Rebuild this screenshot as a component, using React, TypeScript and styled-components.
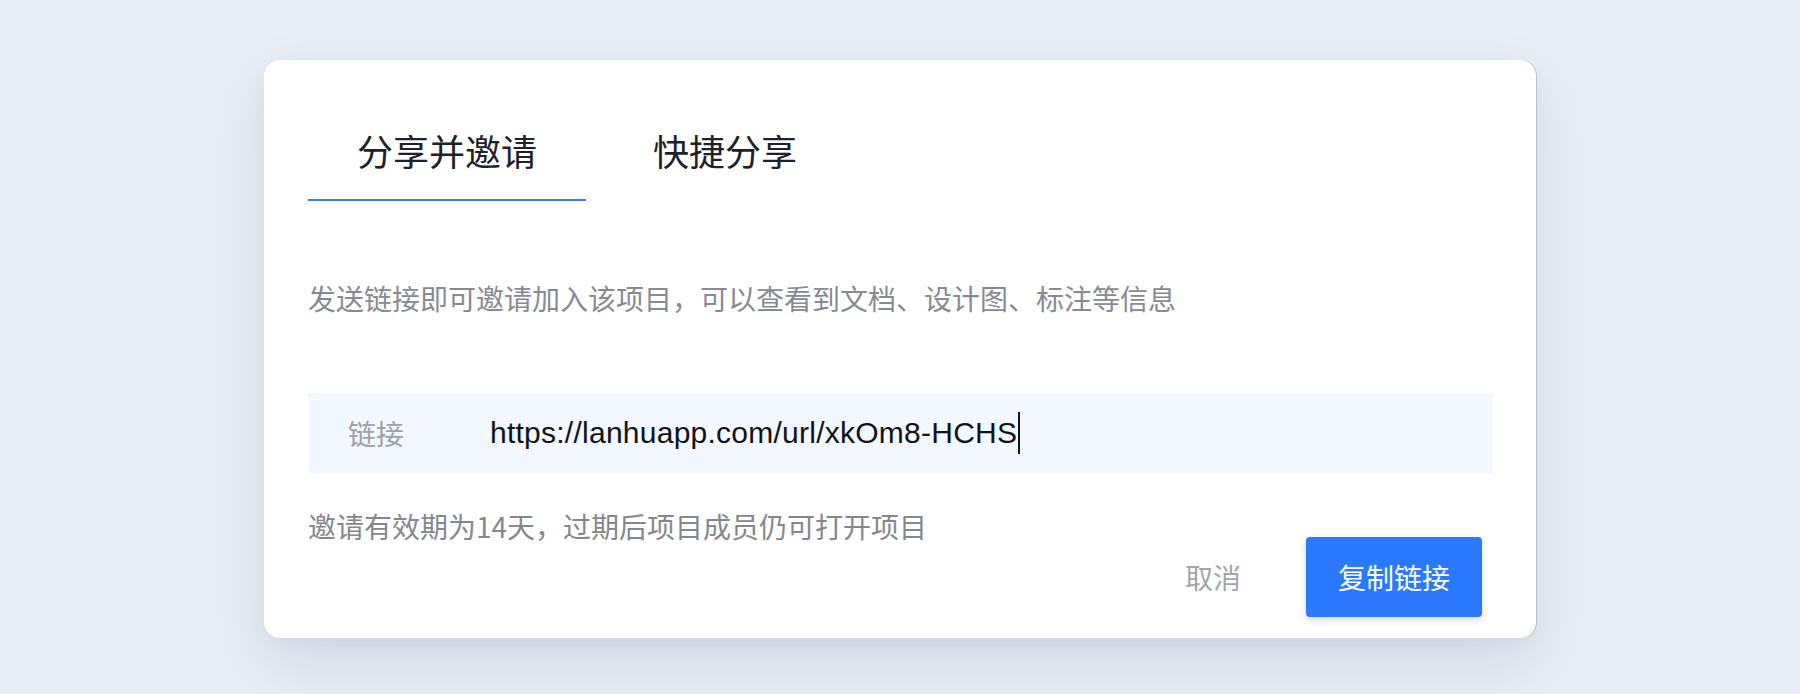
import React from "react";
import styled, { createGlobalStyle } from "styled-components";

const GlobalStyle = createGlobalStyle`
  html, body {
    margin: 0;
    padding: 0;
  }
  body {
    background: #e8eef5;
    min-height: 100vh;
    font-family: "Noto Sans CJK SC", "Noto Sans", sans-serif;
  }
  #root {
    min-height: 694px;
    overflow: hidden;
  }
`;

const Page = styled.div`
  display: flex;
  justify-content: center;
  padding-top: 60px;
`;

const Card = styled.div`
  box-sizing: border-box;
  width: 1272px;
  height: 578px;
  background: #ffffff;
  border-radius: 16px;
  padding: 0 43px 21px 44px;
  box-shadow: 1px 0 0 rgba(120, 130, 145, 0.35), 0 26px 60px rgba(60, 85, 120, 0.13),
    0 6px 18px rgba(60, 85, 120, 0.05);
  display: flex;
  flex-direction: column;
`;

const Tabs = styled.div`
  display: flex;
  padding-top: 66px;
`;

const Tab = styled.div<{ $active?: boolean }>`
  width: 278px;
  text-align: center;
  font-size: 36px;
  line-height: 48px;
  padding-bottom: 25px;
  color: #1d2129;
  border-bottom: 2px solid ${(p) => (p.$active ? "#3f7fd8" : "transparent")};
  font-family: "Noto Sans CJK SC", sans-serif;
`;

const Description = styled.p`
  margin: 77px 0 0;
  font-size: 28px;
  line-height: 40px;
  color: #868a92;
  font-family: "Noto Sans CJK SC", sans-serif;
`;

const LinkRow = styled.div`
  margin-top: 75px;
  height: 80px;
  background: #f3f7fe;
  display: flex;
  align-items: center;
  padding-left: 40px;
`;

const LinkLabel = styled.span`
  width: 142px;
  flex: none;
  font-size: 28px;
  line-height: 80px;
  color: #9da1a8;
  font-family: "Noto Sans CJK SC", sans-serif;
`;

const LinkValue = styled.span`
  font-family: "Liberation Sans", Arial, sans-serif;
  font-size: 30px;
  letter-spacing: 0.25px;
  line-height: 80px;
  color: #111318;
  display: flex;
  align-items: center;
`;

const Caret = styled.span`
  display: inline-block;
  width: 2px;
  height: 42px;
  background: #111318;
  margin-left: 1px;
`;

const Footer = styled.div`
  margin-top: 33px;
  display: flex;
  justify-content: space-between;
  align-items: flex-start;
  padding-right: 11px;
`;

const Note = styled.span`
  font-size: 28px;
  line-height: 40px;
  color: #84878e;
  font-family: "Noto Sans CJK SC", sans-serif;
`;

const Actions = styled.div`
  margin-top: 31px;
  display: flex;
  align-items: center;
  gap: 65px;
`;

const CancelButton = styled.button`
  border: none;
  background: none;
  padding: 0;
  font-family: "Noto Sans CJK SC", sans-serif;
  font-size: 28px;
  line-height: 40px;
  color: #a2a5ab;
  cursor: pointer;
`;

const PrimaryButton = styled.button`
  border: none;
  width: 176px;
  height: 80px;
  border-radius: 4px;
  background: #2a79fe;
  color: #ffffff;
  font-family: "Noto Sans CJK SC", sans-serif;
  font-size: 28px;
  line-height: 40px;
  box-shadow: 0 3px 8px rgba(30, 70, 140, 0.2);
  cursor: pointer;
`;

export default function App() {
  return (
    <>
      <GlobalStyle />
      <Page>
        <Card>
          <Tabs>
            <Tab $active>分享并邀请</Tab>
            <Tab>快捷分享</Tab>
          </Tabs>
          <Description>发送链接即可邀请加入该项目，可以查看到文档、设计图、标注等信息</Description>
          <LinkRow>
            <LinkLabel>链接</LinkLabel>
            <LinkValue>
              https://lanhuapp.com/url/xkOm8-HCHS
              <Caret />
            </LinkValue>
          </LinkRow>
          <Footer>
            <Note>邀请有效期为14天，过期后项目成员仍可打开项目</Note>
            <Actions>
              <CancelButton>取消</CancelButton>
              <PrimaryButton>复制链接</PrimaryButton>
            </Actions>
          </Footer>
        </Card>
      </Page>
    </>
  );
}
